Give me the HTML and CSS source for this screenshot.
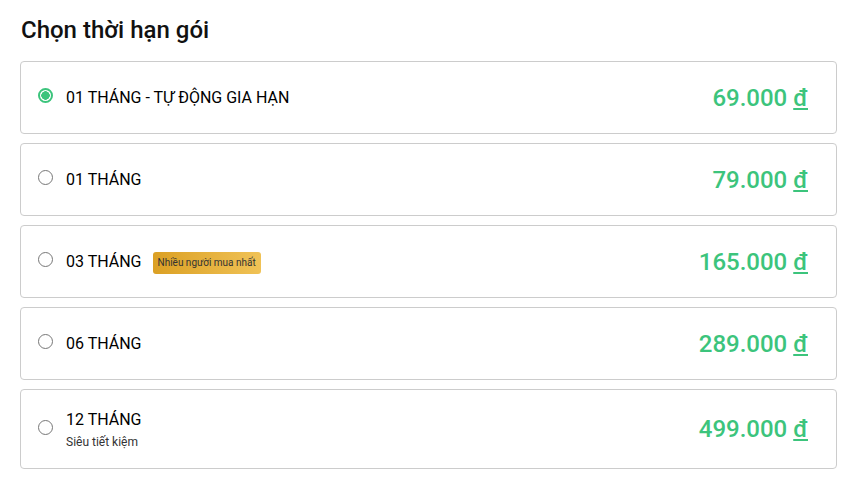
FILE: index.html
```html
<!DOCTYPE html>
<html lang="vi">
<head>
  <meta charset="UTF-8" />
  <meta name="viewport" content="width=device-width, initial-scale=1.0"/>
  <title>Chọn thời hạn gói</title>
  <link rel="stylesheet" href="styles.css">
</head>
<body>

  <div class="container">
    <h2>Chọn thời hạn gói</h2>

    <form class="plans">
      <label class="plan">
        <input type="radio" name="plan" checked />
        <span class="plan-info">
          <span class="plan-name">01 THÁNG - TỰ ĐỘNG GIA HẠN</span>
        </span>
        <span class="price">69.000 <u>đ</u></span>
      </label>

      <label class="plan">
        <input type="radio" name="plan" />
        <span class="plan-info">
          <span class="plan-name">01 THÁNG</span>
        </span>
        <span class="price">79.000 <u>đ</u></span>
      </label>

      <label class="plan">
        <input type="radio" name="plan" />
        <span class="plan-info">
          <span class="plan-name">03 THÁNG <span class="badge">Nhiều người mua nhất</span></span>
        </span>
        <span class="price">165.000 <u>đ</u></span>
      </label>

      <label class="plan">
        <input type="radio" name="plan" />
        <span class="plan-info">
          <span class="plan-name">06 THÁNG</span>
        </span>
        <span class="price">289.000 <u>đ</u></span>
      </label>

      <label class="plan plan-tall">
        <input type="radio" name="plan" />
        <span class="plan-info">
          <span class="plan-name">12 THÁNG</span>
          <span class="plan-note">Siêu tiết kiệm</span>
        </span>
        <span class="price">499.000 <u>đ</u></span>
      </label>
    </form>
  </div>

</body>
</html>
```

FILE: styles.css
```css
body {
  font-family: Roboto, "Liberation Sans", sans-serif;
  background: white;
  color: #111;
  margin: 0;
}

.container {
  padding: 16px 11px 0 20px;
}

h2 {
  font-size: 24px;
  font-weight: 500;
  line-height: 28px;
  margin: 0 0 17px 1px;
}

.plans {
  display: flex;
  flex-direction: column;
  gap: 9px;
}

.plan {
  display: flex;
  align-items: center;
  height: 71px;
  padding: 0 28px 0 17px;
  border: 1px solid #ccc;
  border-radius: 4px;
  cursor: pointer;
}

.plan-tall {
  height: 78px;
}

.plan input {
  appearance: none;
  flex: none;
  width: 15px;
  height: 15px;
  margin: -4px 13px 0 0;
  border: 1px solid #777;
  border-radius: 50%;
  background: white;
}

.plan input:checked {
  border: 2px solid #3cc47c;
  background: radial-gradient(circle, #3cc47c 0 4px, white 4.5px);
}

.plan-info {
  display: flex;
  flex-direction: column;
  gap: 5px;
  flex: 1;
}

.plan-name {
  display: flex;
  align-items: center;
  gap: 11px;
  font-size: 16px;
  font-weight: 400;
  line-height: 20px;
  color: #000;
}

.plan-note {
  font-size: 12px;
  line-height: 14px;
  color: #333;
}

.badge {
  font-size: 10px;
  line-height: 22px;
  padding: 0 5px;
  margin-top: 3px;
  border-radius: 3px;
  color: #333;
  background: linear-gradient(90deg, #dba024, #f0c256);
}

.price {
  font-size: 24px;
  font-weight: 500;
  color: #3cc47c;
}
```
